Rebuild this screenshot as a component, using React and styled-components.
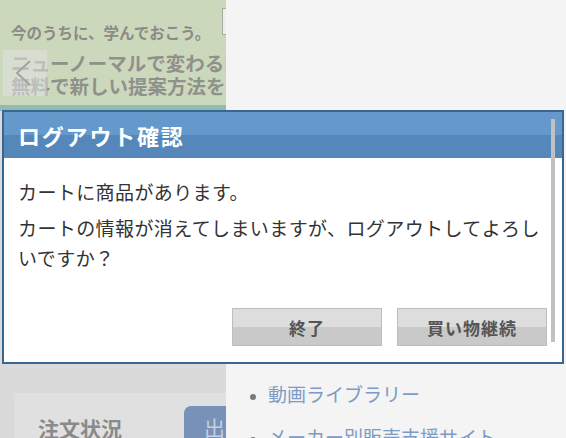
import styled, { createGlobalStyle } from "styled-components";

const GlobalStyle = createGlobalStyle`
  html, body {
    margin: 0;
    padding: 0;
    background: #f4f4f4;
    font-family: "Noto Sans CJK JP", "Noto Sans", sans-serif;
  }
  * { box-sizing: border-box; }
`;

function App() {
  return (
    <>
      <GlobalStyle />
      <StPage>
        <StMain>
          <StBanner>
            <StBannerLead>今のうちに、学んでおこう。</StBannerLead>
            <StBannerTitle>ニューノーマルで変わるI</StBannerTitle>
            <StBannerTitle>無料で新しい提案方法を</StBannerTitle>
            <StBannerBox />
            <StPrevButton aria-label="前へ">
              <svg width="44" height="46" viewBox="0 0 44 46">
                <polyline
                  points="27,11 14,23 27,35"
                  fill="none"
                  stroke="#a3a3a3"
                  strokeWidth="2"
                />
              </svg>
            </StPrevButton>
          </StBanner>
          <StStripe />
          <StMainBody>
            <StOrderCard>
              <StOrderTitle>注文状況</StOrderTitle>
              <StShipButton>出</StShipButton>
            </StOrderCard>
          </StMainBody>
        </StMain>
        <StDrawer>
          <StMenuList>
            <StMenuItem>動画ライブラリー</StMenuItem>
            <StMenuItem>メーカー別販売支援サイト</StMenuItem>
          </StMenuList>
        </StDrawer>

        <StDialog role="dialog">
          <StDialogTitle>ログアウト確認</StDialogTitle>
          <StDialogBody>
            <StMessage>カートに商品があります。</StMessage>
            <StMessage>
              カートの情報が消えてしまいますが、ログアウトしてよろしいですか？
            </StMessage>
            <StActions>
              <StButton>終了</StButton>
              <StButton>買い物継続</StButton>
            </StActions>
          </StDialogBody>
          <StScrollbar />
        </StDialog>
      </StPage>
    </>
  );
}

const StPage = styled.div`
  position: relative;
  display: grid;
  grid-template-columns: 226px 1fr;
  width: 566px;
  height: 438px;
  overflow: hidden;
`;

const StMain = styled.div`
  display: flex;
  flex-direction: column;
  background-color: #dadada;
  overflow: hidden;

  & > * {
    flex-shrink: 0;
  }
`;

const StBanner = styled.div`
  position: relative;
  height: 105px;
  padding: 19px 0 0 11px;
  background-color: #ccd8bc;
  color: #8b8b86;
  white-space: nowrap;
  font-weight: 700;
`;

const StBannerLead = styled.p`
  margin: 0 0 6px;
  font-size: 15.5px;
  line-height: 26px;
`;

const StBannerTitle = styled.p`
  margin: 0;
  font-size: 19.5px;
  line-height: 23px;
  color: #90908c;
`;

const StBannerBox = styled.div`
  position: absolute;
  top: 8px;
  left: 222px;
  width: 20px;
  height: 27px;
  border: 1px solid #a9a9a4;
  background-color: #eeeeee;
`;

const StPrevButton = styled.div`
  position: absolute;
  top: 50px;
  left: 3px;
  width: 44px;
  height: 46px;
  display: flex;
  background-color: rgba(225, 225, 225, 0.55);
`;

const StStripe = styled.div`
  height: 6px;
  background-color: #8fbcb2;
`;

const StMainBody = styled.div`
  padding: 282px 0 0 14px;
`;

const StOrderCard = styled.div`
  display: flex;
  align-items: flex-start;
  height: 80px;
  padding: 13px 0 0 24px;
  background-color: #e0e0e0;
  overflow: hidden;
`;

const StOrderTitle = styled.span`
  flex-shrink: 0;
  font-size: 21px;
  font-weight: 700;
  color: #8a8a8a;
  line-height: 44px;
  white-space: nowrap;
`;

const StShipButton = styled.span`
  flex-shrink: 0;
  margin-left: 62px;
  width: 60px;
  height: 50px;
  padding: 6px 0 0 20px;
  border-radius: 7px 0 0 0;
  background-color: #7891b6;
  color: #c3d0e3;
  font-size: 21px;
  line-height: 30px;
`;

const StDrawer = styled.aside`
  background-color: #f4f4f4;
  padding-top: 372px;
`;

const StMenuList = styled.ul`
  margin: 0;
  padding: 0 0 0 42px;
  list-style: disc;
`;

const StMenuItem = styled.li`
  font-size: 19px;
  line-height: 43px;
  color: #7d9bc4;
  white-space: nowrap;

  &::marker {
    color: #7a7a7a;
    font-size: 15px;
  }
`;

const StDialog = styled.section`
  position: absolute;
  top: 110px;
  left: 2px;
  width: 562px;
  border: 2px solid #3a6694;
  background-color: #ffffff;
`;

const StDialogTitle = styled.h2`
  margin: 0;
  height: 46px;
  padding-left: 14px;
  background: linear-gradient(#6699cb 0%, #6699cb 50%, #5587ba 50%, #5587ba 100%);
  color: #ffffff;
  font-size: 22px;
  font-weight: 700;
  letter-spacing: 1.8px;
  line-height: 46px;
`;

const StDialogBody = styled.div`
  padding: 19px 12px 16px 14px;
`;

const StMessage = styled.p`
  margin: 0 0 6px;
  width: 534px;
  font-size: 19px;
  letter-spacing: 0.4px;
  line-height: 30px;
  color: #333333;
`;

const StActions = styled.div`
  display: flex;
  justify-content: flex-end;
  gap: 15px;
  margin-top: 35px;
  padding-right: 3px;
`;

const StButton = styled.button`
  width: 150px;
  height: 38px;
  border: 1px solid #bdbdbd;
  background: linear-gradient(#dddddd 0%, #dddddd 50%, #c9c9c9 50%, #c9c9c9 100%);
  color: #555555;
  font-family: "Noto Sans CJK JP", sans-serif;
  font-size: 17px;
  font-weight: 700;
  letter-spacing: 1px;
  padding: 0;
`;

const StScrollbar = styled.div`
  position: absolute;
  top: 7px;
  right: 7px;
  width: 4px;
  height: 223px;
  background-color: #c1c1c1;
`;

export default App;
